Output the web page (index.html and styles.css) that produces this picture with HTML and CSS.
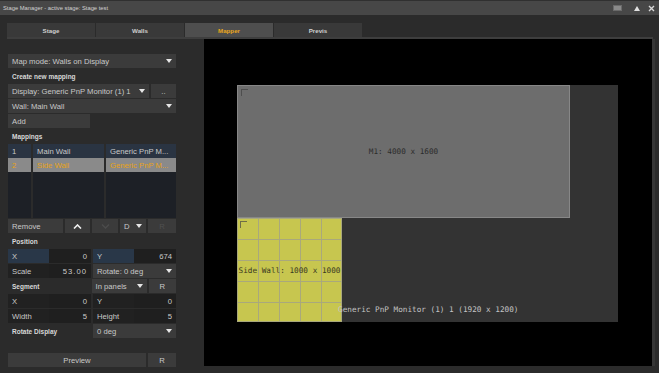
FILE: index.html
```html
<!DOCTYPE html>
<html>
  <head>
    <title>Stage Manager</title>
    <link rel="stylesheet" href="styles.css">
  </head>
  <body>
    <div class="titlebar">
      <span class="title">Stage Manager - active stage: Stage test</span>
      <div class="winbtns">
        <span class="wb-square"></span>
        <span class="wb-up"></span>
        <svg class="wb-close" width="7" height="7" viewBox="0 0 7 7"><path d="M1 1 L6 6 M6 1 L1 6" stroke="#d8d8d8" stroke-width="1.4"/></svg>
      </div>
    </div>

    <div class="tabs">
      <div class="tab">Stage</div>
      <div class="tab">Walls</div>
      <div class="tab active">Mapper</div>
      <div class="tab">Previs</div>
    </div>

    <div class="main">
      <div class="side">
        <div class="row"><div class="dd">Map mode: Walls on Display</div></div>
        <div class="label">Create new mapping</div>
        <div class="row">
          <div class="dd">Display: Generic PnP Monitor (1) 1</div>
          <div class="btn w-dots">..</div>
        </div>
        <div class="row"><div class="dd">Wall: Main Wall</div></div>
        <div class="row"><div class="btn w-add left">Add</div></div>
        <div class="label">Mappings</div>

        <div class="table">
          <div class="tcol">
            <div class="tc">1</div>
            <div class="tc sel">2</div>
          </div>
          <div class="tcol">
            <div class="tc">Main Wall</div>
            <div class="tc sel">Side Wall</div>
          </div>
          <div class="tcol">
            <div class="tc">Generic PnP M...</div>
            <div class="tc sel">Generic PnP M...</div>
          </div>
        </div>

        <div class="row">
          <div class="btn w-remove left">Remove</div>
          <div class="btn w-up">
            <svg width="9" height="5" viewBox="0 0 9 5"><path d="M1 4.5 L4.5 1 L8 4.5" fill="none" stroke="#f0f0f0" stroke-width="1.6"/></svg>
          </div>
          <div class="btn w-down">
            <svg width="9" height="5" viewBox="0 0 9 5"><path d="M1 0.5 L4.5 4 L8 0.5" fill="none" stroke="#4c4c4c" stroke-width="1.4"/></svg>
          </div>
          <div class="dd w-d">D</div>
          <div class="btn w-r dim">R</div>
        </div>

        <div class="label">Position</div>
        <div class="row">
          <div class="field"><span class="k blue">X</span><span class="v">0</span></div>
          <div class="field"><span class="k blue">Y</span><span class="v">674</span></div>
        </div>
        <div class="row">
          <div class="field"><span class="k">Scale</span><span class="v num">53.00</span></div>
          <div class="dd">Rotate: 0 deg</div>
        </div>
        <div class="row">
          <div class="label half">Segment</div>
          <div class="dd w-panels">In panels</div>
          <div class="btn w-r">R</div>
        </div>
        <div class="row">
          <div class="field"><span class="k">X</span><span class="v">0</span></div>
          <div class="field"><span class="k">Y</span><span class="v">0</span></div>
        </div>
        <div class="row">
          <div class="field"><span class="k">Width</span><span class="v">5</span></div>
          <div class="field"><span class="k">Height</span><span class="v">5</span></div>
        </div>
        <div class="row">
          <div class="label half">Rotate Display</div>
          <div class="dd">0 deg</div>
        </div>

        <div class="row preview-row">
          <div class="btn w-preview">Preview</div>
          <div class="btn w-r">R</div>
        </div>
      </div>

      <div class="canvas">
        <div class="display"></div>
        <div class="wall m1">
          <span class="corner"></span>
          M1: 4000 x 1600
        </div>
        <div class="wall side-wall">
          <span class="corner"></span>
          Side Wall: 1000 x 1000
        </div>
        <div class="display-label">Generic PnP Monitor (1) 1 (1920 x 1200)</div>
      </div>
    </div>
  </body>
</html>
```

FILE: styles.css
```css
body {
    margin: 0;
    width: 659px;
    height: 373px;
    overflow: hidden;
    background: #2b2b2b;
    color: #c9c9c9;
    font-family: "Liberation Sans", Arial, sans-serif;
    font-size: 7.7px;
}

/* window title */
.titlebar { height: 14px; background: #474747; border-top: 1px solid #303030; display: flex; align-items: center; padding: 0 4px 0 3px; }
.title { flex: 1; font-size: 5.8px; color: #d2d2d2; }
.winbtns { display: flex; align-items: center; }
.wb-square { width: 9px; height: 6px; background: #8a8a8a; border: 1px solid #6a6a6a; box-sizing: border-box; }
.wb-up { margin-left: 12px; width: 0; height: 0; border-left: 3px solid transparent; border-right: 3px solid transparent; border-bottom: 5px solid #e0e0e0; }
.wb-close { margin-left: 8px; }

/* tabs */
.tabs { display: flex; gap: 1px; margin: 8px 6px 0 7px; border-bottom: 2px solid #3e3e3e; }
.tab { width: 88px; height: 14px; background: #393939; display: flex; align-items: center; justify-content: center; font-size: 6.2px; font-weight: bold; color: #d0d0d0; }
.tab.active { background: #4e4e4e; color: #e8a61c; }

.main { display: flex; margin-left: 8px; }

/* left panel */
.side { width: 168px; padding-top: 15px; display: flex; flex-direction: column; gap: 1px; }
.row { display: flex; gap: 2px; height: 14px; }
.label { height: 14px; display: flex; align-items: center; padding-left: 4px; font-size: 6.5px; font-weight: bold; color: #d8d8d8; }
.label.half { width: 83px; padding-left: 4px; box-sizing: border-box; }

.dd { flex: 1; position: relative; background: #3b3b3b; display: flex; align-items: center; padding: 0 4px; white-space: nowrap; }
.dd::after { content: ""; position: absolute; right: 4px; top: 5px; border-left: 3px solid transparent; border-right: 3px solid transparent; border-top: 4px solid #e6e6e6; }

.btn { background: #3b3b3b; display: flex; align-items: center; justify-content: center; }
.btn.left { justify-content: flex-start; padding-left: 4px; box-sizing: border-box; }
.btn.dim { color: #505050; }
.w-dots { width: 25px; }
.w-add { width: 82px; }
.w-remove { width: 55px; }
.w-up { width: 25px; }
.w-down { width: 26px; }
.w-d { flex: none; width: 26px; box-sizing: border-box; }
.w-r { width: 28px; }
.w-panels { flex: none; width: 55px; box-sizing: border-box; }
.w-preview { flex: 1; }
.preview-row { margin-top: 14px; }

/* mappings table */
.table { display: grid; grid-template-columns: 23px 71px 70px; column-gap: 2px; height: 74px; }
.tcol { background: #1d2026; }
.tc { height: 14px; display: flex; align-items: center; padding-left: 4px; background: #2a3442; white-space: nowrap; overflow: hidden; }
.tc.sel { background: #8a8a8a; color: #e8a317; }

/* numeric fields */
.field { width: 83px; display: flex; }
.k { width: 41px; background: #212121; display: flex; align-items: center; padding-left: 4px; box-sizing: border-box; }
.k.blue { background: #293748; }
.v { flex: 1; background: #1f1f1f; display: flex; align-items: center; justify-content: flex-end; padding-right: 4px; }
.v.num { letter-spacing: 1px; }

/* mapper canvas */
.canvas { position: relative; margin-left: 28px; width: 448px; height: 327px; background: #000; border-right: 3px solid #363636; font-family: "DejaVu Sans Mono", "Liberation Mono", monospace; font-size: 7.7px; }
.display { position: absolute; left: 33px; top: 46px; width: 381px; height: 237px; background: #333; }
.wall { position: absolute; display: flex; align-items: center; justify-content: center; white-space: nowrap; box-sizing: border-box; }
.m1 { left: 33px; top: 46px; width: 333px; height: 133px; background: #6d6d6d; border: 1px solid #878787; color: #2c2c2c; }
.side-wall {
    left: 33px; top: 179px; width: 105px; height: 104px;
    background-color: #c7c64f;
    background-image: linear-gradient(to right, #a9a87c 1px, transparent 1px), linear-gradient(to bottom, #a9a87c 1px, transparent 1px);
    background-size: 21px 21px;
    box-shadow: inset -1px -1px 0 #a9a87c;
    color: #3a3a22;
}
.corner { position: absolute; left: 3px; top: 3px; width: 6px; height: 6px; border-top: 1px solid #4e4e4e; border-left: 1px solid #4e4e4e; }
.side-wall .corner { border-color: #6e6d48; }
.display-label { position: absolute; left: 134px; top: 266px; color: #c4c4c4; white-space: nowrap; }
```
